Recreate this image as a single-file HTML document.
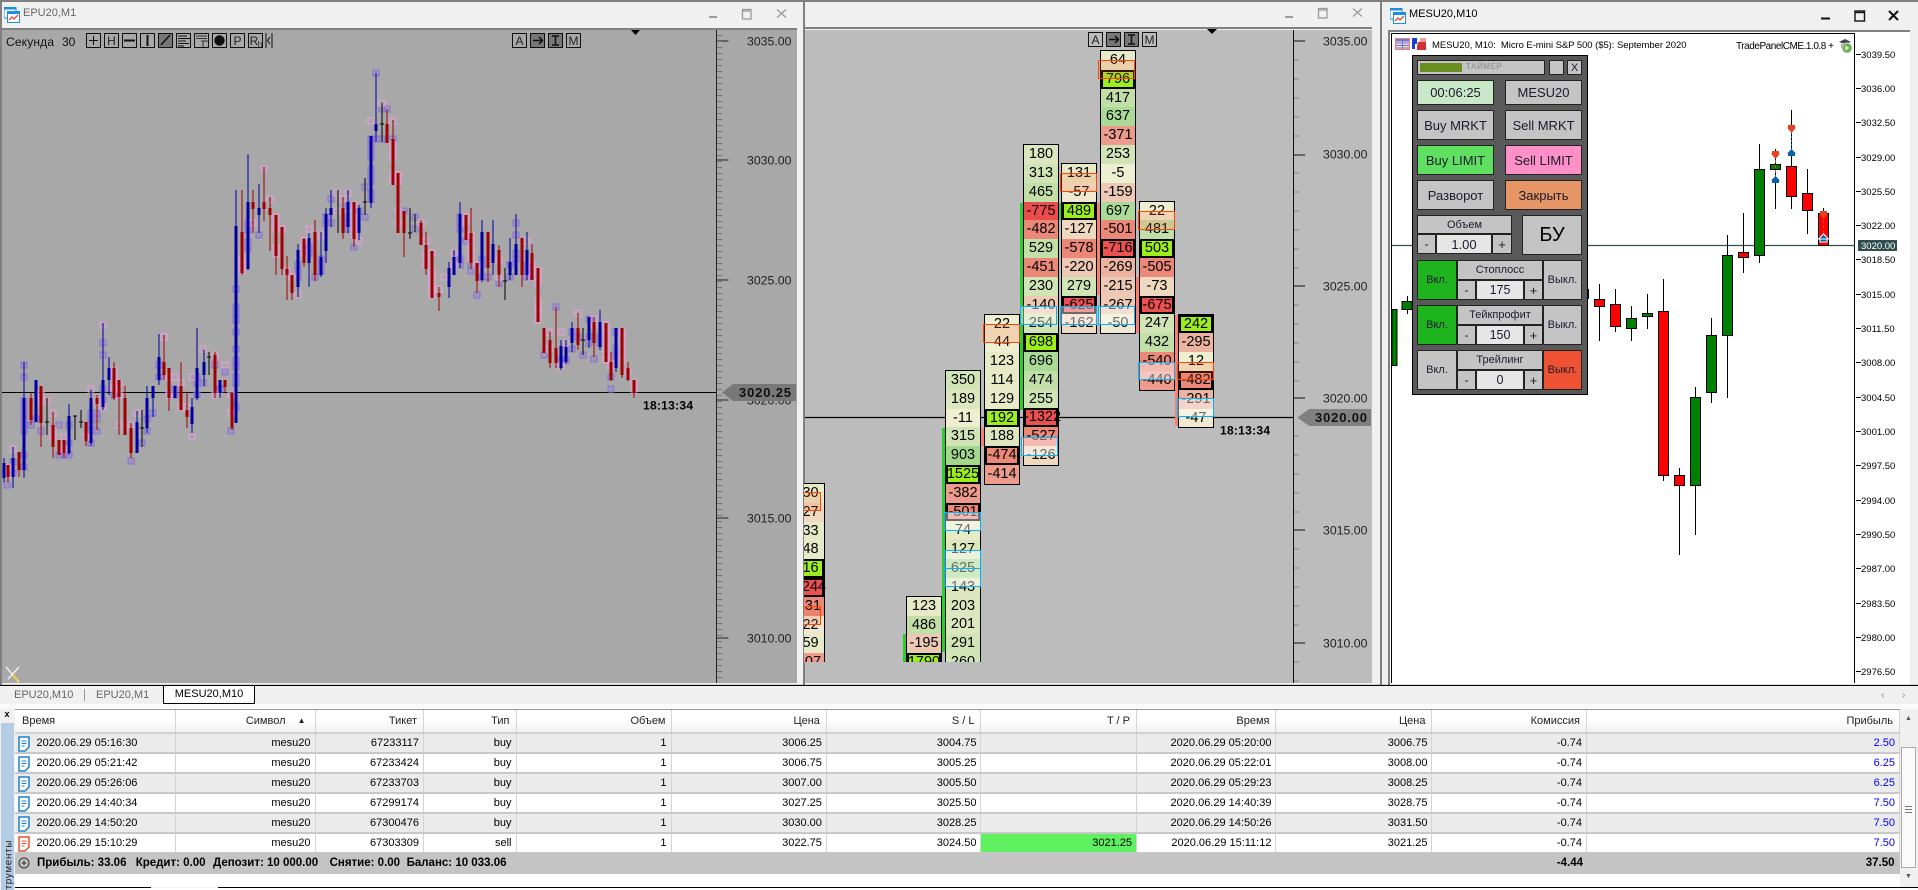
<!DOCTYPE html>
<html><head><meta charset="utf-8"><title>MT5</title>
<style>
html,body{margin:0;padding:0;width:1918px;height:890px;overflow:hidden;background:#f0f0f0;font-family:"Liberation Sans",sans-serif}
.a{position:absolute}
svg{position:absolute;left:0;top:0}
.fp{position:absolute;left:804px;top:0;width:489px;height:662px;overflow:hidden}
.col{position:absolute;width:34px;outline:1px solid #000;font-size:14.5px;color:#000;text-align:center}
.col div{height:18.82px;line-height:18.82px;white-space:nowrap;box-sizing:border-box}
.g0{background:#eeeed0}.g1{background:#e6eac6}.g2{background:#dde7bf}.g3{background:#d0e4b6}.g4{background:#c2dfa8}.g5{background:#aadb96}.g6{background:#a3d78b}
.hi{background:#9cee1c;box-shadow:inset 0 0 0 2px #000}
.n0{background:#f0e8d0}.n1{background:#efd8c0}.n2{background:#edc8b4}.n3{background:#ecb4a0}.n4{background:#ec9b8c}.n5{background:#ec8878}.n7{background:#ec4c4c}
.hr{background:#ec5050;box-shadow:inset 0 0 0 2px #000}.hn{background:#ec8878;box-shadow:inset 0 0 0 2px #000}
.bar{position:absolute;width:4px}
.or,.bl{position:absolute;box-sizing:border-box;width:37px;height:19px}
.or{border:1px solid #ff4500;background:rgba(255,110,60,.2)}
.bl{border:1px solid #00b4ff;background:rgba(255,255,255,.42)}
.b{position:absolute;box-sizing:border-box;background:#c4c4c4;border:1px solid #222;border-radius:1px;color:#1a1a30;font-size:13px;text-align:center;display:flex;align-items:center;justify-content:center}
table{position:absolute;left:15px;top:710px;width:1884.5px;border-collapse:collapse;table-layout:fixed;font-size:11px;color:#000}
td,th{padding:0 4px 0 0;text-align:right;white-space:nowrap;overflow:hidden;border-right:1px solid #d4d4d4;font-weight:normal;box-sizing:border-box}
th{height:23px;padding-right:6px;color:#222;background:linear-gradient(#fff 40%,#f1f1f1);border-bottom:2px solid #d0d0d0}
td{height:20px;border-bottom:2px solid #c8c8c8;line-height:18px}
tr.o td{background:#ebebeb}
td.f{text-align:left;padding-left:21.5px;position:relative}
td.f svg{left:3px;top:2px}
.tot{position:absolute;font-size:11.5px;font-weight:bold;top:857px;white-space:nowrap;color:#000}
.blu{color:#00f}
</style></head><body>

<!-- frame -->
<div class="a" style="left:0;top:0;width:1918px;height:2px;background:#808080"></div>
<div class="a" style="left:0;top:2px;width:1918px;height:683px;background:#f0f0f0"></div>
<div class="a" style="left:0;top:0;width:2px;height:685px;background:#808080"></div>

<!-- left chart -->
<div class="a" style="left:2px;top:30px;width:795px;height:653px;background:#a8a8a8"></div>
<div class="a" style="left:2px;top:28px;width:795px;height:2px;background:#808080"></div>
<div class="a" style="left:23px;top:7px;font-size:11px;color:#666">EPU20,M1</div>
<!-- second chart -->
<div class="a" style="left:803px;top:0;width:2px;height:685px;background:#808080"></div>
<div class="a" style="left:805px;top:30px;width:567px;height:653px;background:#bcbcbc"></div>
<div class="a" style="left:805px;top:27px;width:567px;height:2px;background:#808080"></div>
<div class="a" style="left:1380px;top:0;width:2px;height:685px;background:#808080"></div>
<!-- third chart -->
<div class="a" style="left:1388px;top:30px;width:522px;height:655px;background:#fff;box-shadow:inset 2px 2px 0 #808080"></div>
<div class="a" style="left:1391px;top:33px;width:464px;height:650px;border-left:1px solid #000;border-top:1px solid #000;border-right:1px solid #000;box-sizing:border-box"></div>
<div class="a" style="left:1409px;top:8px;font-size:11px;color:#000">MESU20,M10</div>

<svg width="1918" height="890" viewBox="0 0 1918 890">
<defs>
<symbol id="win" viewBox="0 0 16 16"><rect x="0" y="0" width="12" height="11" fill="#fff" stroke="#1c8fe0"/><rect x="0" y="0" width="12" height="2.5" fill="#1c8fe0"/><rect x="3.5" y="4.5" width="12" height="11" fill="#fff" stroke="#1c8fe0"/><rect x="3.5" y="4.5" width="12" height="2.5" fill="#1c8fe0"/><path d="M5 13l3-3 2 2 4-4" stroke="#e8452c" fill="none" stroke-width="1.3"/></symbol>
<clipPath id="cl"><rect x="2" y="30" width="714" height="653"/></clipPath>
</defs>
<use href="#win" x="4" y="7" width="16" height="16"/>
<use href="#win" x="1390" y="8" width="16" height="16"/>
<!-- window controls -->
<g fill="none" stroke="#9a9a9a" stroke-width="1.3">
<path d="M709 17h8" stroke-width="2"/><rect x="742.5" y="9.5" width="8.5" height="9.5"/><path d="M742.5 11h8.5"/><path d="M777 9.5l9 8M786 9.5l-9 8"/>
<path d="M1285 17h8" stroke-width="2"/><rect x="1318.5" y="8.5" width="8.5" height="9.5"/><path d="M1318.5 10h8.5"/><path d="M1353 8.5l9 8M1362 8.5l-9 8"/>
</g>
<g fill="none" stroke="#111" stroke-width="1.4">
<path d="M1821 18.5h9" stroke-width="2"/><rect x="1855" y="11" width="9.5" height="10"/><path d="M1855 12.5h9.5"/><path d="M1889 11l9 9M1898 11l-9 9" stroke-width="2"/>
</g>

<!-- left axis -->
<path d="M716.5 30V683M716.5 41h12M716.5 160h12M716.5 280h12M716.5 400h12M716.5 518h12M716.5 638h12" stroke="#222" fill="none"/>
<path d="M717 35V683" stroke="#777" stroke-width="5" transform="translate(2.5 0)" stroke-dasharray="1 5"/>
<g font-size="12.3" fill="#222">
<text x="747" y="45.5">3035.00</text><text x="747" y="164.5">3030.00</text><text x="747" y="284.5">3025.00</text><text x="747" y="404.5">3020.00</text><text x="747" y="522.5">3015.00</text><text x="747" y="642.5">3010.00</text>
</g>

<!-- left candles -->
<g clip-path="url(#cl)" shape-rendering="crispEdges">
<path d="M2 392.5H716" stroke="#000" stroke-width="1.2"/>
<path fill="rgba(130,110,220,.3)" stroke="#8a6fd8" stroke-width="1" d="M4 482h6v6h-6zM10 459h6v6h-6zM10 470h6v6h-6zM21 362h6v6h-6zM21 374h6v6h-6zM21 398h6v6h-6zM21 404h6v6h-6zM21 410h6v6h-6zM21 416h6v6h-6zM21 422h6v6h-6zM21 428h6v6h-6zM21 452h6v6h-6zM21 464h6v6h-6zM28 422h6v6h-6zM33 416h6v6h-6zM38 428h6v6h-6zM56 422h6v6h-6zM56 452h6v6h-6zM61 452h6v6h-6zM66 422h6v6h-6zM66 440h6v6h-6zM66 452h6v6h-6zM88 410h6v6h-6zM88 416h6v6h-6zM88 422h6v6h-6zM88 428h6v6h-6zM88 440h6v6h-6zM94 410h6v6h-6zM94 416h6v6h-6zM94 428h6v6h-6zM100 340h6v6h-6zM100 352h6v6h-6zM100 386h6v6h-6zM100 398h6v6h-6zM111 392h6v6h-6zM128 458h6v6h-6zM139 440h6v6h-6zM144 416h6v6h-6zM144 428h6v6h-6zM150 410h6v6h-6zM156 362h6v6h-6zM156 374h6v6h-6zM172 386h6v6h-6zM172 392h6v6h-6zM194 374h6v6h-6zM194 380h6v6h-6zM194 392h6v6h-6zM200 380h6v6h-6zM212 362h6v6h-6zM217 386h6v6h-6zM222 369h6v6h-6zM228 428h6v6h-6zM233 286h6v6h-6zM233 304h6v6h-6zM233 310h6v6h-6zM233 317h6v6h-6zM233 329h6v6h-6zM233 346h6v6h-6zM233 357h6v6h-6zM233 364h6v6h-6zM233 374h6v6h-6zM233 380h6v6h-6zM233 404h6v6h-6zM245 220h6v6h-6zM245 227h6v6h-6zM245 239h6v6h-6zM245 245h6v6h-6zM256 232h6v6h-6zM295 262h6v6h-6zM295 268h6v6h-6zM295 274h6v6h-6zM306 244h6v6h-6zM306 250h6v6h-6zM312 274h6v6h-6zM318 256h6v6h-6zM318 262h6v6h-6zM318 268h6v6h-6zM323 214h6v6h-6zM323 220h6v6h-6zM328 196h6v6h-6zM328 220h6v6h-6zM345 202h6v6h-6zM345 214h6v6h-6zM345 220h6v6h-6zM345 226h6v6h-6zM356 208h6v6h-6zM351 244h6v6h-6zM362 184h6v6h-6zM362 214h6v6h-6zM368 136h6v6h-6zM368 142h6v6h-6zM368 148h6v6h-6zM368 154h6v6h-6zM368 166h6v6h-6zM368 172h6v6h-6zM368 178h6v6h-6zM368 190h6v6h-6zM368 196h6v6h-6zM373 70h6v6h-6zM373 136h6v6h-6zM379 106h6v6h-6zM379 136h6v6h-6zM384 106h6v6h-6zM390 136h6v6h-6zM401 208h6v6h-6zM412 214h6v6h-6zM412 226h6v6h-6zM457 214h6v6h-6zM457 220h6v6h-6zM457 226h6v6h-6zM457 256h6v6h-6zM457 262h6v6h-6zM463 238h6v6h-6zM468 262h6v6h-6zM468 268h6v6h-6zM474 292h6v6h-6zM479 256h6v6h-6zM479 262h6v6h-6zM479 274h6v6h-6zM485 274h6v6h-6zM496 280h6v6h-6zM507 262h6v6h-6zM507 274h6v6h-6zM513 220h6v6h-6zM513 232h6v6h-6zM513 250h6v6h-6zM513 256h6v6h-6zM524 262h6v6h-6zM524 268h6v6h-6zM524 274h6v6h-6zM541 352h6v6h-6zM553 304h6v6h-6zM558 357h6v6h-6zM563 357h6v6h-6zM569 329h6v6h-6zM569 346h6v6h-6zM575 334h6v6h-6zM580 352h6v6h-6zM586 316h6v6h-6zM586 334h6v6h-6zM586 340h6v6h-6zM591 356h6v6h-6zM597 334h6v6h-6zM597 340h6v6h-6zM608 374h6v6h-6zM608 386h6v6h-6zM613 329h6v6h-6zM613 346h6v6h-6zM613 353h6v6h-6z"/>
<path fill="none" stroke="#e8a0dc" stroke-width="1" d="M10 446h6v6h-6zM5 465h6v6h-6zM5 471h6v6h-6zM38 392h6v6h-6zM38 398h6v6h-6zM44 398h6v6h-6zM50 410h6v6h-6zM50 434h6v6h-6zM50 428h6v6h-6zM61 434h6v6h-6zM61 446h6v6h-6zM83 434h6v6h-6zM88 386h6v6h-6zM94 398h6v6h-6zM100 322h6v6h-6zM100 404h6v6h-6zM111 368h6v6h-6zM111 374h6v6h-6zM111 385h6v6h-6zM116 380h6v6h-6zM116 392h6v6h-6zM116 422h6v6h-6zM128 422h6v6h-6zM134 410h6v6h-6zM161 334h6v6h-6zM166 374h6v6h-6zM166 392h6v6h-6zM172 374h6v6h-6zM178 380h6v6h-6zM178 404h6v6h-6zM184 404h6v6h-6zM189 374h6v6h-6zM189 434h6v6h-6zM200 346h6v6h-6zM212 352h6v6h-6zM212 392h6v6h-6zM222 362h6v6h-6zM228 392h6v6h-6zM228 410h6v6h-6zM239 255h6v6h-6zM239 262h6v6h-6zM239 268h6v6h-6zM250 220h6v6h-6zM261 166h6v6h-6zM267 196h6v6h-6zM273 214h6v6h-6zM273 220h6v6h-6zM273 226h6v6h-6zM273 245h6v6h-6zM273 251h6v6h-6zM279 226h6v6h-6zM284 268h6v6h-6zM289 274h6v6h-6zM295 292h6v6h-6zM301 238h6v6h-6zM301 244h6v6h-6zM301 250h6v6h-6zM306 226h6v6h-6zM318 232h6v6h-6zM334 190h6v6h-6zM334 208h6v6h-6zM340 196h6v6h-6zM345 190h6v6h-6zM351 202h6v6h-6zM351 208h6v6h-6zM351 214h6v6h-6zM351 220h6v6h-6zM351 226h6v6h-6zM351 232h6v6h-6zM356 238h6v6h-6zM368 118h6v6h-6zM379 100h6v6h-6zM390 118h6v6h-6zM390 142h6v6h-6zM390 148h6v6h-6zM390 154h6v6h-6zM390 172h6v6h-6zM390 178h6v6h-6zM395 172h6v6h-6zM395 178h6v6h-6zM395 208h6v6h-6zM395 220h6v6h-6zM418 220h6v6h-6zM423 238h6v6h-6zM423 250h6v6h-6zM423 256h6v6h-6zM423 262h6v6h-6zM429 250h6v6h-6zM429 268h6v6h-6zM429 274h6v6h-6zM429 280h6v6h-6zM429 286h6v6h-6zM429 292h6v6h-6zM436 286h6v6h-6zM441 274h6v6h-6zM451 250h6v6h-6zM451 262h6v6h-6zM463 214h6v6h-6zM463 220h6v6h-6zM468 232h6v6h-6zM468 238h6v6h-6zM468 244h6v6h-6zM468 250h6v6h-6zM468 256h6v6h-6zM474 262h6v6h-6zM496 257h6v6h-6zM496 274h6v6h-6zM524 238h6v6h-6zM529 262h6v6h-6zM529 268h6v6h-6zM529 274h6v6h-6zM535 268h6v6h-6zM535 274h6v6h-6zM535 280h6v6h-6zM535 299h6v6h-6zM535 305h6v6h-6zM535 310h6v6h-6zM535 317h6v6h-6zM546 329h6v6h-6zM546 346h6v6h-6zM558 329h6v6h-6zM558 363h6v6h-6zM563 340h6v6h-6zM575 310h6v6h-6zM591 316h6v6h-6zM591 322h6v6h-6zM603 322h6v6h-6zM603 329h6v6h-6zM603 334h6v6h-6zM603 340h6v6h-6zM603 346h6v6h-6zM603 352h6v6h-6zM603 357h6v6h-6zM608 362h6v6h-6zM619 329h6v6h-6zM619 334h6v6h-6zM619 340h6v6h-6zM619 346h6v6h-6zM619 352h6v6h-6zM619 358h6v6h-6zM625 369h6v6h-6zM631 380h6v6h-6zM631 386h6v6h-6z"/>
<path fill="none" stroke="#000" d="M47 398V435M45 422h4M75 416V440M73 416h4M81 410V428M79 422h4M142 410V447M140 428h4M209 352V375M207 357h4M338 190V233M365 178V215M363 202h4M382 103V142M380 124h4M410 208V239M408 233h4M415 214V232M505 268V300M503 281h4M583 328V355M581 340h4"/>
<path fill="none" stroke="#0000a0" d="M4 458V482M13 447V488M24 362V478M69 404V455M91 390V446M103 323V410M109 357V395M137 411V453M147 386V433M153 386V417M159 334V385M192 398V433M197 328V400M204 350V386M220 380V398M236 190V423M248 154V270M259 184V233M298 244V297M309 233V287M321 232V277M326 208V263M331 190V227M348 190V233M359 205V240M371 136V208M376 73V142M449 262V298M454 250V275M460 202V268M482 220V282M493 220V275M510 238V280M516 214V275M527 232V280M561 340V370M566 340V364M572 322V352M589 317V348M600 310V350M616 328V372"/>
<path fill="none" stroke="#0000a0" stroke-width="3" d="M4 463V478M13 458V477M24 398V470M36 380V422M69 416V453M91 398V443M103 380V407M109 368V380M137 422V453M147 398V428M153 386V398M159 357V380M175 386V398M192 407V424M197 368V398M204 362V375M220 380V393M236 226V423M248 202V269M259 208V215M298 250V287M309 238V263M321 257V275M326 214V251M331 208V215M348 202V227M359 208V233M371 136V203M376 124V131M449 268V287M454 257V275M460 214V263M482 232V280M493 244V263M510 262V275M516 244V275M527 250V275M561 346V368M566 347V362M572 328V343M589 317V340M600 322V347M616 328V368"/>
<path fill="none" stroke="#a00000" d="M8 465V482M19 452V477M31 393V425M41 386V447M53 412V458M64 440V458M86 422V446M97 395V430M114 362V400M119 380V435M125 386V435M131 423V458M164 335V380M169 368V411M181 362V410M187 392V428M215 352V398M225 380V393M232 393V430M242 190V275M253 190V233M264 167V221M270 197V251M276 215V275M282 227V275M287 256V300M292 275V300M304 238V267M315 220V281M343 197V239M354 202V247M387 109V143M393 120V185M398 173V233M404 211V257M421 220V245M426 232V275M439 287V311M466 215V240M471 208V269M477 263V293M488 232V282M499 245V287M522 238V287M532 244V280M544 328V353M550 332V368M556 307V368M578 313V350M594 317V357M606 323V362M611 352V381M622 328V378M628 362V381M634 380V398"/>
<path fill="none" stroke="#a00000" stroke-width="3" d="M8 465V477M19 452V470M31 398V420M41 386V423M53 425V447M59 440V455M64 440V453M86 422V441M97 398V404M114 368V398M119 380V397M125 398V435M131 428V453M164 362V375M169 368V398M181 386V410M187 410V417M215 355V393M225 380V387M232 393V428M242 232V273M253 202V209M264 202V209M270 208V215M276 215V256M282 227V269M287 269V275M292 275V293M304 239V263M315 232V275M343 208V233M354 202V239M387 124V143M393 139V185M398 173V233M404 211V233M421 223V245M426 245V269M432 251V298M439 293V297M466 215V240M471 233V263M477 263V281M488 232V268M499 250V275M522 238V275M532 253V280M538 268V322M544 328V353M550 340V363M556 348V363M578 328V345M594 322V343M606 323V362M611 362V380M622 328V375M628 368V380M634 380V393"/>
</g>

<!-- left tag -->
<polygon points="722,392.5 733,384 796,384 796,401 733,401" fill="#787878"/>
<text x="739" y="397" font-size="13" font-weight="bold" fill="#111" textLength="52">3020.25</text>
<text x="643" y="409.5" font-size="12" font-weight="bold" fill="#000" textLength="50">18:13:34</text>

<!-- left toolbar -->
<text x="6" y="46" font-size="12" fill="#111" textLength="48">Секунда</text>
<text x="62" y="46" font-size="12" fill="#111">30</text>
<g fill="none" stroke="#111">
<rect x="86.5" y="33.5" width="14" height="14"/><path d="M93.5 36v9M89 40.5h9"/>
<rect x="104.5" y="33.5" width="14" height="14"/>
<rect x="122.5" y="33.5" width="14" height="14"/><path d="M124 40.5h11" stroke-width="2"/>
<rect x="140.5" y="33.5" width="14" height="14"/><path d="M147.5 35v11" stroke-width="2"/>
<rect x="158.5" y="33.5" width="14" height="14" fill="#777"/><path d="M161 45l9-10" stroke-width="1.5"/>
<rect x="176.5" y="33.5" width="14" height="14"/><path d="M178 36h9M178 38.5h12M178 41h8M178 43.5h11M178 46h6"/>
<rect x="194.5" y="33.5" width="14" height="14"/><path d="M196 36h11M196 38.5h11M201 41h7M203 41v6" stroke="#333"/>
<rect x="212.5" y="33.5" width="14" height="14"/><circle cx="219.5" cy="40.5" r="4.7" fill="#111"/>
<rect x="230.5" y="33.5" width="14" height="14"/>
<rect x="248.5" y="33.5" width="14" height="14"/>
<path d="M266 33v15M272 33v15M270 37l-2.5 3.5 2.5 3.5" />
<rect x="512.5" y="33.5" width="14" height="14"/>
<rect x="530.5" y="33.5" width="14" height="14" fill="#777"/><path d="M533 40.5h9M539 37l3.5 3.5-3.5 3.5" stroke-width="1.5"/>
<rect x="548.5" y="33.5" width="14" height="14" fill="#777"/><path d="M552 36h7M552 45h7M555.5 36v9" stroke-width="1.5"/>
<rect x="566.5" y="33.5" width="14" height="14"/>
</g>
<g font-size="12" fill="#222" text-anchor="middle">
<text x="111.5" y="45">H</text><text x="237.5" y="45">P</text><text x="254" y="45">R</text><text x="260" y="47" font-size="8">h</text>
<text x="519.5" y="45">A</text><text x="573.5" y="45">M</text>
</g>
<polygon points="631,30 640,30 635.5,35" fill="#000"/>
<!-- tool icon -->
<path d="M6 667l13 15M19 667L8 679" stroke="#eee" stroke-width="1.5"/><path d="M13 675l5 6" stroke="#f0d040" stroke-width="2.2"/>

<!-- second chart axis -->
<path d="M1293.5 30V683" stroke="#111"/>
<path d="M1293 41h12M1293 155h12M1293 286h12M1293 398h12M1293 530h12M1293 643h12" stroke="#111"/>
<path d="M1294 60h5M1294 79h5M1294 98h5M1294 117h5M1294 136h5M1294 173h5M1294 192h5M1294 211h5M1294 230h5M1294 249h5M1294 268h5M1294 305h5M1294 324h5M1294 343h5M1294 362h5M1294 381h5M1294 436h5M1294 455h5M1294 474h5M1294 493h5M1294 512h5M1294 549h5M1294 568h5M1294 587h5M1294 606h5M1294 625h5M1294 662h5M1294 681h5" stroke="#888"/>
<g font-size="12.3" fill="#222">
<text x="1323" y="45.5">3035.00</text><text x="1323" y="158.5">3030.00</text><text x="1323" y="290.5">3025.00</text><text x="1323" y="402.5">3020.00</text><text x="1323" y="534.5">3015.00</text><text x="1323" y="647.5">3010.00</text>
</g>
<path d="M805 417.5H1293" stroke="#000" stroke-width="1.2"/>
<polygon points="1297.5,417.5 1309,409 1371,409 1371,426 1309,426" fill="#808080"/>
<text x="1315" y="422" font-size="13" font-weight="bold" fill="#111" textLength="52">3020.00</text>
<text x="1220" y="434.5" font-size="12" font-weight="bold" fill="#000" textLength="50">18:13:34</text>
<g fill="none" stroke="#111">
<rect x="1088.5" y="32.5" width="14" height="14"/>
<rect x="1106.5" y="32.5" width="14" height="14" fill="#777"/><path d="M1109 39.5h9M1115 36l3.5 3.5-3.5 3.5" stroke-width="1.5"/>
<rect x="1124.5" y="32.5" width="14" height="14" fill="#777"/><path d="M1128 35h7M1128 44h7M1131.5 35v9" stroke-width="1.5"/>
<rect x="1142.5" y="32.5" width="14" height="14"/>
</g>
<g font-size="12" fill="#222" text-anchor="middle"><text x="1095.5" y="44">A</text><text x="1149.5" y="44">M</text></g>
<polygon points="1207,29 1217,29 1212,34" fill="#000"/>

<!-- third chart -->
<path d="M1392 245.5H1855" stroke="#2f4f4f" stroke-width="1.2"/>
<g stroke="#000" stroke-width="1.2" shape-rendering="crispEdges">
<path d="M1407.5 296V314M1599.5 284V341M1615.5 289V332M1631.5 306V341M1647.5 294V329M1663.5 279V481M1679.5 468V555M1695.5 387V535M1711.5 318V403M1727.5 235V398M1743.5 213V273M1759.5 144V263M1775.5 149V209M1791.5 110V209M1807.5 169V234M1823.5 208V214" fill="none"/>
<g fill="#008000"><rect x="1402" y="301.5" width="10" height="8"/><rect x="1392" y="309.5" width="5" height="56"/><rect x="1626.5" y="318.5" width="10" height="10"/><rect x="1642.5" y="313.5" width="10" height="3"/><rect x="1690.5" y="397.5" width="10" height="88"/><rect x="1706.5" y="335.5" width="10" height="57"/><rect x="1722.5" y="255.5" width="10" height="80"/><rect x="1754.5" y="169.5" width="10" height="86"/><rect x="1770.5" y="164.5" width="10" height="5"/></g>
<g fill="#ff0000"><rect x="1594.5" y="299.5" width="10" height="7"/><rect x="1610.5" y="304.5" width="10" height="22"/><rect x="1658.5" y="311.5" width="10" height="164"/><rect x="1674.5" y="475.5" width="10" height="10"/><rect x="1738.5" y="252.5" width="10" height="5"/><rect x="1786.5" y="166.5" width="10" height="30"/><rect x="1802.5" y="193.5" width="10" height="17"/><rect x="1818.5" y="213.5" width="10" height="32"/></g>
</g>
<rect x="1587" y="289" width="2" height="10" fill="#000"/>
<path d="M1791.5 128V152" stroke="#1060a8" stroke-dasharray="2 2"/><path d="M1775.5 155V179M1823.5 215V238" stroke="#e84020" stroke-dasharray="3 2"/>
<g fill="#e84020"><path d="M1788 125h7v2.500h-7zM1791.500 133l4.500-5.500h-9z"/><path d="M1772 151h7v2.500h-7zM1775.500 159l4.500-5.500h-9z"/><path d="M1820 211h7v2.500h-7zM1823.500 219l4.500-5.500h-9z"/></g>
<g fill="#1060a8"><path d="M1791.500 149l4.500 4.500h-9zM1788 153.500h7v2.500h-7z"/><path d="M1775.500 176l4.500 4.500h-9zM1772 180.500h7v2.500h-7z"/></g>
<path d="M1823.500 234l5 5h-10zM1820 239h7v3h-7z" fill="#1060a8" stroke="#fff"/>
<path d="M1856 54.5h5M1856 88.5h5M1856 122.5h5M1856 157.5h5M1856 191.5h5M1856 225.5h5M1856 259.5h5M1856 294.5h5M1856 328.5h5M1856 362.5h5M1856 397.5h5M1856 431.5h5M1856 465.5h5M1856 500.5h5M1856 534.5h5M1856 568.5h5M1856 603.5h5M1856 637.5h5M1856 671.5h5" stroke="#000"/>
<g font-size="9.5" fill="#000">
<text x="1861" y="58">3039.50</text><text x="1861" y="92">3036.00</text><text x="1861" y="126">3032.50</text><text x="1861" y="161">3029.00</text><text x="1861" y="195">3025.50</text><text x="1861" y="229">3022.00</text><text x="1861" y="263">3018.50</text><text x="1861" y="298">3015.00</text><text x="1861" y="332">3011.50</text><text x="1861" y="366">3008.00</text><text x="1861" y="401">3004.50</text><text x="1861" y="435">3001.00</text><text x="1861" y="469">2997.50</text><text x="1861" y="504">2994.00</text><text x="1861" y="538">2990.50</text><text x="1861" y="572">2987.00</text><text x="1861" y="607">2983.50</text><text x="1861" y="641">2980.00</text><text x="1861" y="675">2976.50</text>
</g>
<rect x="1858" y="240" width="39" height="11" fill="#2f4f4f"/>
<text x="1861" y="249" font-size="9.5" fill="#fff">3020.00</text>
<text x="1432" y="48" font-size="9.5" fill="#000" textLength="254.5">MESU20, M10:&#160;&#160;Micro E-mini S&amp;P 500 ($5): September 2020</text>
<text x="1736" y="49" font-size="10" fill="#000" textLength="98">TradePanelCME.1.0.8 +</text>
<!-- chart header icons -->
<rect x="1395.5" y="38.5" width="14" height="11" fill="#f8d8c8" stroke="#f08070"/><rect x="1396" y="39" width="13" height="2.5" fill="#6a7ad8"/><path d="M1396 43h13M1396 45.5h13M1396 48h13M1402.5 41v8" stroke="#6a7ad8"/>
<path d="M1412 38h5v6h-2v5h-3z" fill="#1c40d0"/><path d="M1418 42h8v8h-9v-4z" fill="#d03030"/><path d="M1420 38h6v4h-6z" fill="#e8a0a0"/>
<path d="M1839 42l6-3 6 3-6 2z" fill="#444"/><path d="M1841 44h7v4h-7z" fill="#999"/><circle cx="1847" cy="48" r="5" fill="#6ab04c" stroke="#cfd8cf"/><path d="M1845.500 45.500v5l3.500-2.500z" fill="#fff"/>

<!-- bottom strip -->
<path d="M0 685.5H1918" stroke="#000" stroke-width="1.3"/>
<rect x="1" y="723" width="13" height="167" fill="#b4cce4"/>
<text x="7" y="717" font-size="9" font-weight="bold" text-anchor="middle" fill="#000">x</text>
<text transform="translate(11.5 840) rotate(-90)" text-anchor="end" font-size="10" fill="#222" letter-spacing=".6">Инструменты</text>
</svg>

<!-- footprint -->
<div class="fp">
<div class="bar" style="left:99px;top:634px;height:28px;background:#2ecc2e"></div>
<div class="bar" style="left:138px;top:428px;height:224px;background:#2ecc2e"></div>
<div class="bar" style="left:216px;top:203px;height:207px;background:#2ecc2e"></div>
<div class="bar" style="left:254px;top:203px;height:17px;background:#2ecc2e"></div>
<div class="bar" style="left:177px;top:428px;height:18px;background:#f88070"></div>
<div class="bar" style="left:293px;top:203px;height:92px;background:#f88070"></div>
<div class="bar" style="left:332px;top:277px;height:56px;background:#f88070"></div>
<div class="bar" style="left:371px;top:315px;height:111px;background:#f88070"></div>

<div class="col" style="left:-15px;top:483.9px;width:35px">
<div class="g1">130</div><div class="n1">127</div><div class="g1">133</div><div class="g1">148</div><div class="hi">716</div><div class="hr">-1244</div><div class="n5">-131</div><div class="n0">122</div><div class="g1">159</div><div class="n4">-307</div>
</div>
<div class="col" style="left:103px;top:596.8px"><div class="g1">123</div><div class="g4">486</div><div class="n2">-195</div><div class="hi">1790</div></div>
<div class="col" style="left:142px;top:370.9px">
<div class="g3">350</div><div class="g2">189</div><div class="g0">-11</div><div class="g3">315</div><div class="g6">903</div><div class="hi">1525</div><div class="n4">-382</div><div class="hn">-501</div><div class="g1">74</div><div class="g2">127</div><div class="g5">625</div><div class="g2">143</div><div class="g2">203</div><div class="g2">201</div><div class="g3">291</div><div class="g3">260</div>
</div>
<div class="col" style="left:181px;top:314.5px">
<div class="g0">22</div><div class="g0">44</div><div class="g1">123</div><div class="g1">114</div><div class="g1">129</div><div class="hi">192</div><div class="g2">188</div><div class="hn">-474</div><div class="n4">-414</div>
</div>
<div class="col" style="left:220px;top:145.1px">
<div class="g2">180</div><div class="g3">313</div><div class="g4">465</div><div class="n7">-775</div><div class="n5">-482</div><div class="g4">529</div><div class="n5">-451</div><div class="g3">230</div><div class="n2">-140</div><div class="g3">254</div><div class="hi">698</div><div class="g5">696</div><div class="g4">474</div><div class="g3">255</div><div class="hr">-1322</div><div class="n5">-527</div><div class="n1">-126</div>
</div>
<div class="col" style="left:258px;top:163.9px">
<div class="g1">131</div><div class="n0">-57</div><div class="hi">489</div><div class="n1">-127</div><div class="n5">-578</div><div class="n2">-220</div><div class="g3">279</div><div class="hr">-625</div><div class="n1">-162</div>
</div>
<div class="col" style="left:297px;top:51px">
<div class="g1">64</div><div class="hi">796</div><div class="g4">417</div><div class="g5">637</div><div class="n4">-371</div><div class="g3">253</div><div class="g0">-5</div><div class="n2">-159</div><div class="g5">697</div><div class="n5">-501</div><div class="hr">-716</div><div class="n3">-269</div><div class="n2">-215</div><div class="n2">-267</div><div class="n0">-50</div>
</div>
<div class="col" style="left:336px;top:201.6px">
<div class="g0">22</div><div class="g4">481</div><div class="hi">503</div><div class="n5">-505</div><div class="n1">-73</div><div class="hr">-675</div><div class="g3">247</div><div class="g4">432</div><div class="n5">-540</div><div class="n4">-440</div>
</div>
<div class="col" style="left:375px;top:314.5px">
<div class="hi">242</div><div class="n3">-295</div><div class="g0">12</div><div class="hn">-482</div><div class="n3">-291</div><div class="n0">-47</div>
</div>

<div class="or" style="left:294px;top:60px"></div>
<div class="or" style="left:255.5px;top:173px"></div>
<div class="or" style="left:333.5px;top:211px"></div>
<div class="or" style="left:178.6px;top:324px"></div>
<div class="or" style="left:372.6px;top:361.5px;height:18px"></div>
<div class="or" style="left:-20px;top:492px"></div>
<div class="or" style="left:-20px;top:605.7px"></div>
<div class="bl" style="left:216px;top:305.7px"></div>
<div class="bl" style="left:255.5px;top:305.7px"></div>
<div class="bl" style="left:294px;top:305.7px"></div>
<div class="bl" style="left:333.8px;top:361.7px;height:18px"></div>
<div class="bl" style="left:372.6px;top:398.3px"></div>
<div class="bl" style="left:217px;top:436.7px"></div>
<div class="bl" style="left:140px;top:511.7px"></div>
<div class="bl" style="left:140px;top:549.7px"></div>
<div class="bl" style="left:140px;top:568.3px"></div>
</div>

<!-- trade panel -->
<div class="a" style="left:1412px;top:55px;width:176px;height:340px;background:#595959;border:1px solid #000;box-sizing:border-box"></div>
<div class="b" style="left:1417px;top:60px;width:128px;height:15px"></div>
<div class="a" style="left:1420px;top:63px;width:42px;height:9px;background:#6b8e23"></div>
<div class="a" style="left:1466px;top:62px;font-size:8px;font-weight:bold;color:#999;letter-spacing:.5px">ТАЙМЕР</div>
<div class="b" style="left:1549px;top:60px;width:15px;height:15px"></div>
<div class="b" style="left:1567px;top:60px;width:15px;height:15px;font-size:11px">X</div>
<div class="b" style="left:1417px;top:80px;width:77px;height:25px;background:#c8e8c8">00:06:25</div>
<div class="b" style="left:1505px;top:80px;width:77px;height:25px">MESU20</div>
<div class="b" style="left:1417px;top:110px;width:77px;height:30px">Buy MRKT</div>
<div class="b" style="left:1505px;top:110px;width:77px;height:30px">Sell MRKT</div>
<div class="b" style="left:1417px;top:145px;width:77px;height:30px;background:#60e060">Buy LIMIT</div>
<div class="b" style="left:1505px;top:145px;width:77px;height:30px;background:#ff91c8">Sell LIMIT</div>
<div class="b" style="left:1417px;top:180px;width:77px;height:30px">Разворот</div>
<div class="b" style="left:1505px;top:180px;width:77px;height:30px;background:#e69664">Закрыть</div>

<div class="b" style="left:1417px;top:215px;width:95px;height:19px;font-size:11px">Объем</div>
<div class="b" style="left:1417px;top:234px;width:19px;height:20px;font-size:12px">-</div>
<div class="b" style="left:1436px;top:234px;width:56px;height:20px;background:#e6e6e6;font-size:13px">1.00</div>
<div class="b" style="left:1492px;top:234px;width:20px;height:20px;font-size:13px">+</div>
<div class="b" style="left:1522px;top:215px;width:60px;height:40px;font-size:20px;color:#000">БУ</div>

<div class="b" style="left:1417px;top:260px;width:40px;height:40px;background:#1eb41e;font-size:11px">Вкл.</div>
<div class="b" style="left:1457px;top:260px;width:86px;height:20px;font-size:11px">Стоплосс</div>
<div class="b" style="left:1457px;top:280px;width:19px;height:20px;font-size:12px">-</div>
<div class="b" style="left:1476px;top:280px;width:48px;height:20px;background:#e6e6e6;font-size:12.5px">175</div>
<div class="b" style="left:1524px;top:280px;width:19px;height:20px">+</div>
<div class="b" style="left:1543px;top:260px;width:39px;height:40px;font-size:11px">Выкл.</div>

<div class="b" style="left:1417px;top:305px;width:40px;height:40px;background:#1eb41e;font-size:11px">Вкл.</div>
<div class="b" style="left:1457px;top:305px;width:86px;height:20px;font-size:11px">Тейкпрофит</div>
<div class="b" style="left:1457px;top:325px;width:19px;height:20px;font-size:12px">-</div>
<div class="b" style="left:1476px;top:325px;width:48px;height:20px;background:#e6e6e6;font-size:12.5px">150</div>
<div class="b" style="left:1524px;top:325px;width:19px;height:20px">+</div>
<div class="b" style="left:1543px;top:305px;width:39px;height:40px;font-size:11px">Выкл.</div>

<div class="b" style="left:1417px;top:350px;width:40px;height:40px;font-size:11px">Вкл.</div>
<div class="b" style="left:1457px;top:350px;width:86px;height:20px;font-size:11px">Трейлинг</div>
<div class="b" style="left:1457px;top:370px;width:19px;height:20px;font-size:12px">-</div>
<div class="b" style="left:1476px;top:370px;width:48px;height:20px;background:#e6e6e6;font-size:12.5px">0</div>
<div class="b" style="left:1524px;top:370px;width:19px;height:20px">+</div>
<div class="b" style="left:1543px;top:350px;width:39px;height:40px;background:#ee5233;font-size:11px">Выкл.</div>

<!-- tabs -->
<div class="a" style="left:0;top:686px;width:1918px;height:18px;background:#f0f0f0"></div>
<div class="a" style="left:14px;top:689px;font-size:11px;color:#666">EPU20,M10</div>
<div class="a" style="left:84px;top:689px;width:1px;height:12px;background:#999"></div>
<div class="a" style="left:96px;top:689px;font-size:11px;color:#666">EPU20,M1</div>
<div class="a" style="left:163px;top:686px;width:92px;height:18px;background:#fff;border:1px solid #000;border-top:none;box-sizing:border-box;font-size:11px;color:#000;text-align:center;line-height:17px">MESU20,M10</div>
<div class="a" style="left:1881px;top:690px;font-size:10px;color:#888">‹</div>
<div class="a" style="left:1902px;top:690px;font-size:10px;color:#888">›</div>

<div class="a" style="left:0;top:704px;width:1918px;height:5px;background:#fafafa"></div>
<div class="a" style="left:15px;top:709px;width:1885px;height:178px;background:#fff;border-top:1px solid #999;box-sizing:border-box"></div>

<table>
<colgroup><col style="width:160.5px"><col style="width:139.5px"><col style="width:108.5px"><col style="width:92.5px"><col style="width:155px"><col style="width:155.4px"><col style="width:154.6px"><col style="width:155.5px"><col style="width:139.5px"><col style="width:156px"><col style="width:154.5px"><col style="width:313px"></colgroup>
<tr><th style="text-align:left;padding-left:7px">Время</th><th style="padding-right:29px;position:relative">Символ<span style="position:absolute;right:9px;top:6px;font-size:8px">▲</span></th><th>Тикет</th><th>Тип</th><th style="padding-right:5px">Объем</th><th>Цена</th><th>S / L</th><th>T / P</th><th>Время</th><th>Цена</th><th>Комиссия</th><th>Прибыль</th></tr>
<tr class="o"><td class="f"><svg width="12" height="16" viewBox="0 0 12 16"><path d="M1 1h10v10l-4 4H1z" fill="#fff" stroke="#1c7fd0" stroke-width="1.5"/><path d="M3.5 5h5M3.5 7.5h5M3.5 10h3" stroke="#1c7fd0"/></svg>2020.06.29 05:16:30</td><td>mesu20</td><td>67233117</td><td>buy</td><td>1</td><td>3006.25</td><td>3004.75</td><td></td><td>2020.06.29 05:20:00</td><td>3006.75</td><td>-0.74</td><td class="blu">2.50</td></tr>
<tr><td class="f"><svg width="12" height="16" viewBox="0 0 12 16"><path d="M1 1h10v10l-4 4H1z" fill="#fff" stroke="#1c7fd0" stroke-width="1.5"/><path d="M3.5 5h5M3.5 7.5h5M3.5 10h3" stroke="#1c7fd0"/></svg>2020.06.29 05:21:42</td><td>mesu20</td><td>67233424</td><td>buy</td><td>1</td><td>3006.75</td><td>3005.25</td><td></td><td>2020.06.29 05:22:01</td><td>3008.00</td><td>-0.74</td><td class="blu">6.25</td></tr>
<tr class="o"><td class="f"><svg width="12" height="16" viewBox="0 0 12 16"><path d="M1 1h10v10l-4 4H1z" fill="#fff" stroke="#1c7fd0" stroke-width="1.5"/><path d="M3.5 5h5M3.5 7.5h5M3.5 10h3" stroke="#1c7fd0"/></svg>2020.06.29 05:26:06</td><td>mesu20</td><td>67233703</td><td>buy</td><td>1</td><td>3007.00</td><td>3005.50</td><td></td><td>2020.06.29 05:29:23</td><td>3008.25</td><td>-0.74</td><td class="blu">6.25</td></tr>
<tr><td class="f"><svg width="12" height="16" viewBox="0 0 12 16"><path d="M1 1h10v10l-4 4H1z" fill="#fff" stroke="#1c7fd0" stroke-width="1.5"/><path d="M3.5 5h5M3.5 7.5h5M3.5 10h3" stroke="#1c7fd0"/></svg>2020.06.29 14:40:34</td><td>mesu20</td><td>67299174</td><td>buy</td><td>1</td><td>3027.25</td><td>3025.50</td><td></td><td>2020.06.29 14:40:39</td><td>3028.75</td><td>-0.74</td><td class="blu">7.50</td></tr>
<tr class="o"><td class="f"><svg width="12" height="16" viewBox="0 0 12 16"><path d="M1 1h10v10l-4 4H1z" fill="#fff" stroke="#1c7fd0" stroke-width="1.5"/><path d="M3.5 5h5M3.5 7.5h5M3.5 10h3" stroke="#1c7fd0"/></svg>2020.06.29 14:50:20</td><td>mesu20</td><td>67300476</td><td>buy</td><td>1</td><td>3030.00</td><td>3028.25</td><td></td><td>2020.06.29 14:50:26</td><td>3031.50</td><td>-0.74</td><td class="blu">7.50</td></tr>
<tr><td class="f"><svg width="12" height="16" viewBox="0 0 12 16"><path d="M1 1h10v10l-4 4H1z" fill="#fff" stroke="#e8522c" stroke-width="1.5"/><path d="M3.5 5h5M3.5 7.5h5M3.5 10h3" stroke="#e8522c"/></svg>2020.06.29 15:10:29</td><td>mesu20</td><td>67303309</td><td>sell</td><td>1</td><td>3022.75</td><td>3024.50</td><td style="background:#5ef05e">3021.25</td><td>2020.06.29 15:11:12</td><td>3021.25</td><td>-0.74</td><td class="blu">7.50</td></tr>
</table>

<div class="a" style="left:15px;top:853px;width:1885px;height:21px;background:#c4c4c4"></div>
<svg width="1918" height="890" viewBox="0 0 1918 890"><circle cx="24" cy="863" r="5" fill="none" stroke="#333"/><path d="M21.5 863h5M24 860.5v5" stroke="#333"/></svg>
<div class="tot" style="left:37px">Прибыль: 33.06</div>
<div class="tot" style="left:135.7px">Кредит: 0.00</div>
<div class="tot" style="left:213px">Депозит: 10 000.00</div>
<div class="tot" style="left:329.6px">Снятие: 0.00</div>
<div class="tot" style="left:406.6px">Баланс: 10 033.06</div>
<div class="tot" style="right:335px">-4.44</div>
<div class="tot" style="right:23.5px">37.50</div>

<!-- scrollbar -->
<div class="a" style="left:1900px;top:709px;width:18px;height:178px;background:#f0f0f0"></div>
<div class="a" style="left:1901px;top:747px;width:15px;height:121px;background:#fafafa;border:1px solid #aaa;box-sizing:border-box"></div>
<div class="a" style="left:1905px;top:806px;width:7px;height:1px;background:#777;box-shadow:0 3px 0 #777,0 6px 0 #777"></div>
<div class="a" style="left:1905px;top:715px;font-size:7px;color:#555">▲</div>
<div class="a" style="left:1905px;top:873px;font-size:7px;color:#555">▼</div>

<!-- bottom -->
<div class="a" style="left:15px;top:874px;width:1885px;height:13px;background:#fff"></div>
<div class="a" style="left:15px;top:887px;width:136px;height:1px;background:#000"></div>
<div class="a" style="left:218px;top:887px;width:1700px;height:1px;background:#000"></div>
<div class="a" style="left:15px;top:888px;width:1903px;height:2px;background:#fff"></div>
</body></html>
